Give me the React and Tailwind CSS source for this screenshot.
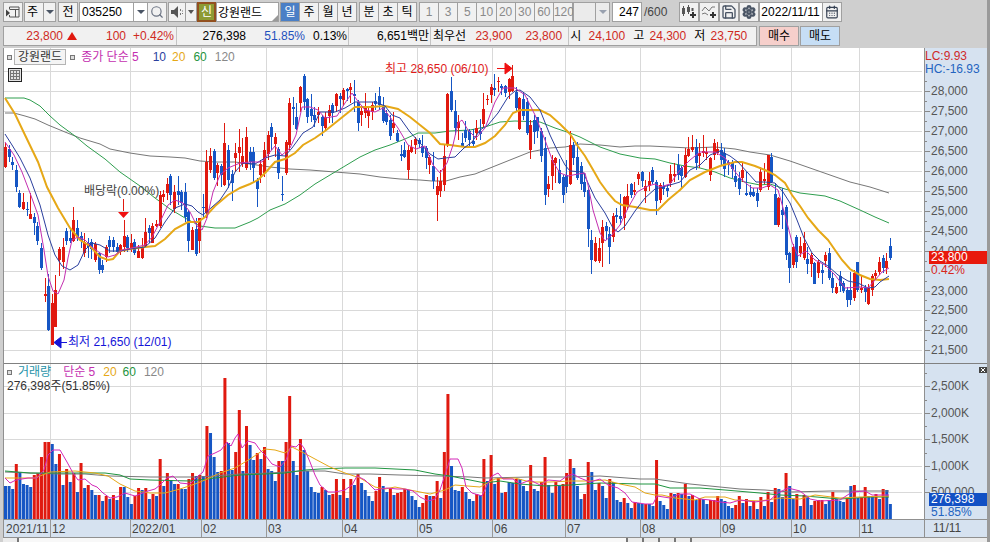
import React from 'react';
import { Search, Save, Settings, CalendarDays } from 'lucide-react';

const RED = '#e0190f';
const BLUE = '#1656c4';
const STEP = 3.597;
const FIRST_X = 5;

// one entry per trading day: colour, high, body top, body bottom, low
const CANDLES = `
r143 147 167 168,b145 149 157 162,b157 162 165 170,b165 170 187 192,b190 193 207 208,r193 202 209 210,b202 209 210 216,r193 214 219 219,b213 217 223 235,b222 226 241 245,
b243 248 268 270,r278 294 296 302,b274 286 330 331,r294 303 345 345,r275 290 327 327,r247 249 260 276,r238 247 262 269,b228 231 241 245,b229 238 241 243,r207 220 241 242,
b220 228 237 241,b232 236 241 248,r233 242 253 257,b238 243 247 258,b239 242 249 259,r242 244 260 262,b252 253 270 274,b260 265 270 273,r245 247 257 262,b236 240 247 253,
b237 240 247 252,b243 247 252 253,r244 245 252 255,r220 236 247 252,b235 237 248 252,r234 243 248 252,b239 242 253 255,r245 251 258 258,r238 247 258 259,r218 232 247 248,
b225 228 233 243,r223 226 243 243,r220 224 226 227,r191 195 226 228,r190 194 197 202,r178 184 193 200,b174 176 195 205,r185 192 209 213,b176 191 195 205,b190 192 203 210,
b183 192 217 222,b210 212 241 252,r227 230 250 250,b218 229 254 256,r218 218 241 253,b194 207 208 217,r150 162 213 218,r148 156 170 173,b149 151 178 180,r163 165 173 186,
b164 166 175 187,r123 143 185 186,b145 150 180 188,b170 174 183 201,r143 153 158 172,r129 147 153 172,r138 156 164 167,r127 137 168 170,b147 152 162 170,b147 152 168 183,
b178 180 189 207,r160 164 175 183,r142 150 173 177,r131 135 154 160,b123 127 137 150,r133 137 144 157,b147 149 173 179,b176 194 195 201,r140 142 173 175,r98 103 145 150,
b97 107 109 125,b103 117 129 130,r86 87 103 112,b74 76 102 110,b98 99 117 123,b94 109 116 122,b107 115 120 127,r107 112 115 123,b115 117 126 136,r112 117 128 131,
r105 110 116 123,b103 105 113 123,r93 94 106 112,b93 96 99 113,r88 90 100 106,b88 89 91 101,r83 87 90 103,b80 94 96 112,b100 102 123 131,r107 111 115 126,
r93 108 113 118,r107 111 116 128,r102 105 112 120,b93 101 104 110,b87 96 105 110,b97 106 121 123,b110 113 122 125,b115 120 136 140,r112 123 128 133,b130 133 141 142,
b145 154 156 161,b142 150 157 158,r145 150 170 179,r140 147 152 153,r137 139 145 154,b138 140 144 148,b135 146 153 157,b146 148 158 169,r155 157 165 174,b152 166 181 189,
r177 186 195 221,r170 181 191 197,r145 156 185 191,r93 94 144 147,b77 91 110 112,b100 111 128 135,r115 122 128 140,b133 143 146 147,b121 130 138 142,b129 131 140 147,
b129 141 144 147,r120 128 133 140,b119 131 134 140,r93 109 124 127,r95 99 100 105,r84 87 95 103,b74 88 90 96,r77 81 82 92,b84 86 88 95,b85 86 93 97,
r78 79 92 99,r65 76 91 92,b87 92 108 112,r97 98 129 130,b92 99 116 120,b98 102 133 135,r120 125 150 159,b115 120 132 144,b117 117 131 138,b128 131 156 162,
b137 148 195 205,r176 184 189 197,r155 160 176 190,r157 158 163 183,b159 170 183 184,b175 177 195 203,b160 175 187 193,r131 145 184 185,b142 145 158 165,b142 157 178 180,
b162 166 184 190,b173 182 192 197,b187 190 229 247,b230 240 260 274,r237 243 261 262,r238 248 261 263,r220 227 243 267,b222 226 231 240,b227 234 247 264,r213 216 237 242,
b208 215 217 223,b194 216 219 225,r196 197 218 230,r184 196 206 210,b183 184 195 198,r182 190 192 195,r172 174 179 185,b171 172 181 187,r180 186 191 203,r172 181 186 191,
b167 170 182 184,b180 182 201 215,r183 185 200 203,b182 187 189 195,b185 188 191 197,r165 174 183 187,r163 174 176 182,b154 165 175 180,b166 168 176 189,r148 155 177 178,
r137 149 156 157,r135 147 150 152,b139 147 163 170,r143 153 156 168,r135 151 153 157,r147 152 154 160,r157 158 175 181,r139 143 155 160,r142 149 153 155,b143 150 160 165,
b148 153 169 177,b160 162 163 175,b160 163 169 178,b165 176 182 187,b172 178 189 195,r162 170 178 182,b172 193 195 196,b185 192 195 197,b188 192 196 197,b188 193 201 207,
r167 172 190 192,r163 179 181 184,r155 155 187 190,b153 157 182 183,b183 194 225 225,r197 198 225 227,b188 210 215 229,b205 207 255 260,b252 253 268 283,r244 247 265 268,
b235 237 262 268,r237 246 253 257,r232 243 258 260,b247 259 264 274,r253 255 264 277,b262 263 284 284,r260 262 273 278,b264 270 273 284,r252 255 261 267,b248 253 278 280,
b273 278 288 293,r283 287 293 294,b271 276 286 292,b281 283 291 293,b287 290 300 307,b272 290 300 305,r270 273 298 301,b262 262 290 292,r276 288 290 293,b285 288 292 302,
r284 288 304 305,r274 276 290 296,r270 273 276 280,r257 262 272 275,b255 258 268 273,r253 261 268 274,b238 246 258 260
`.trim().split(/,\s*/).map((s) => {
    const [high, top, bottom, low] = s.slice(1).split(' ').map(Number);
    return { color: s[0] === 'r' ? RED : BLUE, high, top, bottom, low };
});

// one entry per trading day: colour and bar height
const VOLUMES = `
b33 b33 b30 r55 b47 b35 b34 b32 r44 r46 r62 r77 r77 b75 b55 r65 b34 r50 b37 r46
b27 r56 b31 r34 b29 b24 r24 b18 r23 b20 r24 b19 r32 b32 b22 b15 r23 r31 b29 r31
b20 r25 b23 r60 b33 r46 b39 b35 r35 b30 b30 r40 r46 b43 r44 b43 r93 b86 b62 b47
r48 r141 b76 b49 r67 r109 b48 r93 b74 b59 r66 b60 r72 b50 b48 b38 r58 b58 r77 r123
b58 b44 r80 b69 b48 b32 b27 b26 r32 b29 b24 r25 r40 b24 r40 b21 r40 b34 r45 b36
b29 b23 b18 r28 r42 b33 b27 r31 b24 r26 r27 r30 b29 b23 b19 b12 r16 r24 b23 r23
r38 b21 r67 r125 b53 b29 b28 r32 b27 b20 b18 r25 b24 r60 b38 r64 b35 r41 b26 r27
b37 b36 r40 b40 b33 b28 r54 b30 b28 r37 r62 b34 b26 r37 b33 r35 r46 r60 b51 b33
b20 r25 r57 b47 b29 r36 b33 b21 r40 b37 b19 b17 r21 b16 b11 r17 b16 b15 r15 b15
b13 r59 b18 b14 b10 r26 b25 r26 b25 r35 b23 r24 b19 r21 b20 b15 r19 r19 r23 b20
b18 b13 b11 r14 r23 b16 r20 b13 r18 b10 r22 b13 r27 b17 r31 b30 b22 r46 b33 b20
r25 b13 r24 b22 b14 r18 r19 r19 b15 b19 r27 b20 b18 b17 r21 b33 r34 b21 r22 r32
b23 b23 r25 b20 r30 b29 b15
`.trim().split(/\s+/).map((s) => ({ color: s[0] === 'r' ? RED : BLUE, height: Number(s.slice(1)) }));

const PRICE_LINES = [
    { color: '#777777', width: 1, points: '5,113 14,113 25,116 35,119 48,125 65,132 80,138 100,144 110,149 130,153 150,156 170,157 185,158 200,161 215,162 235,162 250,164 270,167 290,169 310,170 335,172 360,174 380,177 400,179 420,180 432,181 446,181 460,177 475,174 490,168 510,160 530,152 550,148 565,147 580,144 600,145 620,147 635,146 650,146 670,147 690,148 715,147 735,149 750,152 770,155 790,161 810,168 830,175 850,182 870,187 889,193' },
    { color: '#2f9e4f', width: 1, points: '5,98 24,98 30,100 40,106 50,116 60,125 75,136 87,146 105,159 120,172 140,186 155,198 170,209 185,218 200,226 215,228 235,228 250,222 258,218 270,210 285,204 300,195 315,184 330,175 345,166 360,157 375,150 390,145 405,139 418,133 435,133 450,131 470,130 485,127 500,122 515,121 540,122 555,128 570,133 580,137 600,147 620,154 640,158 655,159 670,163 685,166 700,168 715,172 730,178 745,182 760,185 770,184 785,189 800,193 825,196 840,201 860,210 875,217 889,223' },
    { color: '#e6a817', width: 2, points: '5,98 15,114 25,135 38,162 47,187 58,208 70,228 80,240 90,246 100,257 108,260 113,259 120,251 130,249 145,247 155,246 165,239 175,229 188,222 198,222 205,217 215,206 228,195 240,188 250,184 258,180 266,172 275,162 285,159 295,153 303,145 315,138 325,131 335,123 345,115 355,107 370,107 385,106 398,109 410,117 420,125 430,133 440,144 450,145 465,147 475,147 485,143 495,136 505,125 513,113 520,110 540,110 550,115 560,124 570,134 577,145 585,156 592,168 600,182 608,193 615,201 622,205 635,207 650,210 658,210 668,200 680,190 690,180 705,172 720,166 735,162 742,162 755,166 765,170 775,175 785,183 792,195 800,206 808,218 818,230 828,240 835,250 842,260 850,269 860,275 870,279 880,280 889,279' },
    { color: '#2b3f9e', width: 1, points: '5,134 12,145 20,158 30,178 40,205 48,235 55,255 62,266 70,270 78,265 85,250 92,243 100,245 110,251 120,251 130,249 145,247 155,238 165,222 175,208 185,204 192,206 198,212 203,215 212,207 220,200 228,188 235,172 243,163 255,164 265,158 275,155 285,156 292,148 303,133 313,127 320,112 335,112 345,108 355,102 375,102 385,106 392,115 400,118 410,132 420,143 430,154 438,159 445,158 455,157 464,148 472,142 480,130 488,125 498,113 508,97 515,91 520,90 530,97 540,110 550,135 558,152 565,165 570,171 583,172 588,183 595,198 605,213 613,228 618,232 625,226 635,211 645,198 655,189 670,185 680,182 690,170 700,165 710,155 720,151 730,156 738,162 748,173 756,182 765,182 775,183 783,192 790,203 797,220 804,238 812,253 820,261 828,266 838,275 848,281 858,283 868,288 875,287 880,282 889,276' },
    { color: '#c42fb0', width: 1, points: '5,142 14,155 22,172 30,193 38,215 44,250 48,276 53,291 58,294 64,280 68,258 72,240 78,237 85,240 92,247 100,253 108,257 115,255 122,250 132,248 145,245 152,237 160,222 168,205 175,200 183,203 190,212 197,226 202,230 207,218 213,192 220,175 228,168 240,163 250,162 262,162 270,152 275,146 282,155 290,148 296,135 302,107 310,107 318,110 325,118 337,116 345,103 352,93 357,100 365,110 375,112 383,108 390,117 398,128 408,145 416,149 425,146 433,165 440,173 447,163 453,145 458,123 462,120 468,130 476,138 485,128 495,102 503,88 515,88 525,95 535,115 545,140 553,162 560,173 568,176 578,174 585,173 588,185 593,210 600,233 605,241 612,235 620,225 628,208 637,192 648,186 655,184 660,187 670,184 680,170 690,160 700,152 715,152 725,158 732,168 742,180 752,188 762,188 770,185 778,190 785,215 792,242 798,256 806,251 815,260 825,265 835,275 845,288 860,287 868,288 875,280 882,272 889,268' },
];

const VOLUME_LINES = [
    { color: '#777777', points: '5,472 30,473 60,474 85,474 110,476 150,477 200,477 240,474 270,473 300,471 325,471 345,474 370,474 400,475 440,476 470,477 485,478 530,477 570,477 600,476 640,479 655,479 690,484 720,487 740,489 765,490 790,492 830,491 889,491' },
    { color: '#1f9440', points: '5,471 30,473 60,473 105,473 120,475 130,479 150,480 190,481 215,478 240,475 265,474 285,473 305,470 320,469 345,468 375,468 415,470 435,474 450,476 470,480 485,483 500,481 520,484 545,486 570,485 600,483 640,484 655,484 670,488 700,488 725,490 760,493 780,495 805,496 840,499 870,497 889,497' },
    { color: '#e6a817', points: '5,478 15,478 35,478 50,472 75,471 95,473 108,476 120,484 135,491 150,493 165,493 180,489 195,484 205,480 220,473 235,468 250,459 265,449 275,450 285,453 292,447 302,452 315,459 330,467 345,473 360,478 375,487 385,489 395,487 410,490 430,494 445,490 455,485 480,487 495,479 515,478 530,482 550,482 570,481 590,481 605,480 620,484 635,487 645,493 655,495 662,495 675,498 695,500 705,497 725,497 735,500 760,501 780,498 800,499 815,495 840,498 860,497 889,496' },
    { color: '#d428b8', points: '5,478 10,483 16,480 28,478 37,478 44,470 48,455 53,450 60,450 67,462 73,473 78,480 85,479 92,485 97,487 103,493 110,498 117,497 125,493 135,496 148,491 155,489 160,485 167,478 173,476 180,483 190,484 197,477 203,472 208,456 215,453 221,450 227,442 231,446 235,438 238,434 242,448 248,441 255,443 260,450 265,455 272,464 280,467 286,460 291,446 296,447 300,443 304,448 310,462 315,475 320,485 328,492 335,492 345,490 352,485 357,476 365,480 375,490 387,488 397,489 405,489 413,491 420,497 428,501 435,499 440,490 445,475 450,459 458,459 462,468 466,487 472,493 482,496 487,485 492,476 498,473 503,479 513,479 520,484 530,480 540,485 548,480 560,481 567,476 573,474 580,478 590,482 600,479 608,485 618,488 625,493 632,502 645,504 653,504 657,496 670,498 680,494 690,494 700,499 710,500 720,502 730,503 740,500 755,502 770,500 778,493 788,488 800,491 810,499 820,501 840,500 852,492 865,491 872,495 889,495' },
];

const MONTHS = [
    { x: 4, label: '2021/11' },
    { x: 50, label: '12' },
    { x: 130, label: '2022/01' },
    { x: 201, label: '02' },
    { x: 266, label: '03' },
    { x: 342, label: '04' },
    { x: 417, label: '05' },
    { x: 492, label: '06' },
    { x: 565, label: '07' },
    { x: 640, label: '08' },
    { x: 720, label: '09' },
    { x: 791, label: '10' },
    { x: 859, label: '11' },
];

// the 23,500 label gives way to the current price tag
const PRICE_TICKS = Array.from({ length: 14 }, (_, i) => ({
    y: Math.round(91.3 + i * 19.92),
    label: i === 9 ? '' : (28000 - i * 500).toLocaleString('en-US'),
}));

const VOLUME_TICKS = [
    { y: 386, label: '2,500K' },
    { y: 413, label: '2,000K' },
    { y: 439, label: '1,500K' },
    { y: 466, label: '1,000K' },
    { y: 492, label: '500,000' },
];

const dayX = (i) => Math.round(FIRST_X + i * STEP);

const Caret = ({ className = 'text-gray-600' }) => (
    <svg className={`h-1 w-2 ${className}`} viewBox="0 0 8 4" fill="currentColor" aria-hidden="true">
        <path d="M0 0h8L4 4z" />
    </svg>
);

const ToolButton = ({ label, children, className = 'w-5' }) => (
    <button type="button" aria-label={label} className={`flex h-5 shrink-0 items-center justify-center border border-[#a0a0a0] bg-[#f1f1f1] ${className}`}>
        {children}
    </button>
);

const Segments = ({ items, active, className }) => (
    <div className={`flex h-5 shrink-0 divide-x divide-[#a0a0a0] border border-[#a0a0a0] ${className}`}>
        {items.map((item) => (
            <button
                key={item}
                type="button"
                className={`min-w-0 flex-1 ${item === active ? 'bg-[#4a7fc6] text-white' : 'bg-[#f1f1f1]'}`}
            >
                {item}
            </button>
        ))}
    </div>
);

const Toolbar = () => (
    <div className="flex h-[23px] items-center pl-[3px]">
        <ToolButton label="창 전환">
            <svg className="h-4 w-4" viewBox="0 0 16 16" fill="none" stroke="#555" aria-hidden="true">
                <path d="M4.500 5V3h9.500v10H4.500v-2M4.500 5.500H14M10.500 5.500V13" />
                <path d="M1 5.500v7l4-3.500z" fill="#444" stroke="none" />
            </svg>
        </ToolButton>
        <div className="relative ml-px h-5 w-8 shrink-0 border border-[#a0a0a0]">
            <select aria-label="종목 구분" defaultValue="주" className="h-full w-full appearance-none bg-[#f1f1f1] pl-0.5">
                <option>주</option>
            </select>
            <span className="pointer-events-none absolute inset-y-0 right-0 flex w-3 items-center justify-center border-l border-[#a0a0a0]">
                <Caret />
            </span>
        </div>
        <div className="ml-0.5">
            <ToolButton label="전 종목">전</ToolButton>
        </div>
        <div className="ml-px flex h-5 w-[69px] shrink-0 border border-[#a0a0a0] bg-white">
            <input aria-label="종목코드" defaultValue="035250" className="w-[53px] min-w-0 pl-0.5" />
            <button type="button" aria-label="종목코드 목록" className="flex flex-1 items-center justify-center border-l border-[#a0a0a0]">
                <Caret />
            </button>
        </div>
        <ToolButton label="검색" className="-ml-px w-5">
            <Search className="h-3.5 w-3.5 text-gray-500" />
        </ToolButton>
        <div className="ml-px flex">
            <ToolButton label="소리" className="w-[18px]">
                <svg className="h-3.5 w-3.5" viewBox="0 0 14 14" aria-hidden="true">
                    <path d="M1 5h3l4-4v12L4 9H1z" fill="#555" />
                    <path d="M10 4h1v2h-1zM10 8h1v2h-1zM12 5.500h1v1h-1zM12 8h1v1h-1z" fill="#777" />
                </svg>
            </ToolButton>
            <ToolButton label="소리 목록" className="-ml-px w-3">
                <svg className="h-1 w-1.5" viewBox="0 0 6 4" fill="#555" aria-hidden="true"><path d="M0 0h6L3 4z" /></svg>
            </ToolButton>
        </div>
        <button type="button" className="h-5 w-[19px] shrink-0 border-2 border-[#92501f] bg-[#8d9b33] leading-none text-white">신</button>
        <div className="relative shrink-0">
            <input aria-label="종목명" defaultValue="강원랜드" className="block h-5 w-[63px] border border-[#a0a0a0] bg-white pl-px" />
            <svg className="absolute right-px bottom-px h-1.5 w-1.5" viewBox="0 0 6 6" fill="#999" aria-hidden="true"><path d="M6 0v6H0z" /></svg>
        </div>
        <div className="ml-px flex gap-0.5">
            <Segments items={['일', '주', '월', '년']} active="일" className="w-[77px]" />
            <Segments items={['분', '초', '틱']} className="w-[58px]" />
            <Segments items={['1', '3', '5', '10', '20', '30', '60', '120']} className="w-[154px] text-[#8a8a8a]" />
        </div>
        <div className="relative h-5 w-[37px] shrink-0 border border-[#a0a0a0]">
            <select aria-label="주기 선택" disabled className="block h-full w-full appearance-none bg-[#ebebeb]">
                <option></option>
            </select>
            <span className="pointer-events-none absolute inset-y-0 right-0 flex w-3.5 items-center justify-center border-l border-[#a0a0a0]">
                <Caret className="text-gray-400" />
            </span>
        </div>
        <label className="ml-0.5 flex items-center text-[#444]">
            <input aria-label="표시 개수" defaultValue="247" className="h-5 w-[30px] border border-[#a0a0a0] bg-white pr-0.5 text-right text-black" />
            <span className="ml-0.5">/600</span>
        </label>
        <div className="ml-3 flex">
            <ToolButton label="캔들 추가">
                <svg className="h-4 w-4" viewBox="0 0 16 16" fill="#555" aria-hidden="true">
                    <path d="M1 4h3v6H1zM2 2h1v10H2zM6 3h3v5H6zM7 1h1v9H7zM10.500 4h2v3h-2z" />
                    <path d="M11 8h2v2h2v2h-2v2h-2v-2H9v-2h2z" fill="#333" />
                </svg>
            </ToolButton>
            <ToolButton label="지표 추가">
                <svg className="h-4 w-4" viewBox="0 0 16 16" aria-hidden="true">
                    <path d="M1 7l3-4 4 4 3-4h3M1 10l3-1 3 2" fill="none" stroke="#777" />
                    <path d="M11 8h2v2h2v2h-2v2h-2v-2H9v-2h2z" fill="#333" />
                </svg>
            </ToolButton>
            <ToolButton label="저장">
                <Save className="h-4 w-4 text-gray-600" strokeWidth={2} />
            </ToolButton>
            <ToolButton label="설정">
                <Settings className="h-3.5 w-3.5 text-gray-600" strokeWidth={4} />
            </ToolButton>
        </div>
        <input aria-label="조회일" defaultValue="2022/11/11" className="h-5 w-16 shrink-0 border border-[#a0a0a0] bg-white pl-px" />
        <ToolButton label="달력" className="-ml-px w-5">
            <CalendarDays className="h-3.5 w-3.5 text-gray-700" strokeWidth={2} />
        </ToolButton>
    </div>
);

const QuoteBar = () => (
    <div className="flex h-[25px] items-center pl-[3px] text-[#cf2a1e]">
        <div className="flex h-5 w-[754px] shrink-0 items-center border border-[#a0a0a0] bg-[#f1f1f1] whitespace-nowrap">
            <span className="w-[59px] text-right">23,800</span>
            <svg className="ml-1 h-2 w-2.5" viewBox="0 0 10 8" fill={RED} aria-label="상승"><path d="M5 0l5 8H0z" /></svg>
            <span className="w-[49px] text-right">100</span>
            <span className="w-12 text-right">+0.42%</span>
            <div className="ml-0.5 flex h-full items-center border-l border-[#c4c4c4] text-black">
                <span className="w-[69px] text-right">276,398</span>
                <span className="w-[59px] text-right text-[#1f50bd]">51.85%</span>
                <span className="w-[42px] text-right">0.13%</span>
            </div>
            <div className="ml-px flex h-full items-center border-l border-[#c4c4c4] text-black">
                <span className="w-20 text-right">6,651백만</span>
            </div>
            <div className="ml-px flex h-full items-center border-l border-[#c4c4c4]">
                <span className="ml-0.5 text-black">최우선</span>
                <span className="w-[46px] text-right">23,900</span>
                <span className="w-[50px] text-right">23,800</span>
            </div>
            <div className="ml-1.5 flex h-full items-center border-l border-[#c4c4c4]">
                <span className="ml-px text-black">시</span>
                <span className="w-11 text-right">24,100</span>
                <span className="ml-2 text-black">고</span>
                <span className="w-[42px] text-right">24,300</span>
                <span className="ml-2 text-black">저</span>
                <span className="w-[42px] text-right">23,750</span>
            </div>
        </div>
        <button type="button" className="ml-0.5 h-5 w-10 border border-[#a0a0a0] bg-[#f6cfcb] text-black">매수</button>
        <button type="button" className="ml-px h-5 w-10 border border-[#a0a0a0] bg-[#c6def5] text-black">매도</button>
    </div>
);

const Marker = () => <span className="h-[5px] w-[5px] border border-[#777] bg-[#ddd]" />;

const GridLines = ({ ys, top, bottom }) => (
    <g stroke="#d9d9d9" shapeRendering="crispEdges">
        {ys.map((y) => <line key={y} x1="4" x2="922" y1={y + 0.5} y2={y + 0.5} />)}
        {MONTHS.slice(1).map((m) => <line key={m.x} x1={m.x + 0.5} x2={m.x + 0.5} y1={top} y2={bottom} />)}
    </g>
);

const PricePane = () => (
    <div className="relative h-[315px] min-w-0 flex-1 overflow-hidden bg-white">
        <svg className="block h-full w-full" role="img" aria-label="강원랜드 일봉 차트">
            <g transform="translate(-4 -48)">
                <GridLines ys={[71, ...PRICE_TICKS.map((t) => t.y)]} top={48} bottom={363} />
                {PRICE_LINES.slice(0, 2).map((l) => (
                    <polyline key={l.color} points={l.points} fill="none" stroke={l.color} strokeWidth={l.width} />
                ))}
                <g shapeRendering="crispEdges">
                    {CANDLES.map((c, i) => (
                        <g key={i} fill={c.color}>
                            <rect x={dayX(i)} y={c.high} width="1" height={c.low - c.high} />
                            <rect x={dayX(i) - 1} y={c.top} width="3" height={c.bottom - c.top} />
                        </g>
                    ))}
                </g>
                {PRICE_LINES.slice(2).map((l) => (
                    <polyline key={l.color} points={l.points} fill="none" stroke={l.color} strokeWidth={l.width} />
                ))}
                <g fontSize="12">
                    <text x="385" y="73" fill="#e01a1a">최고 28,650 (06/10)</text>
                    <path d="M497 68.500h9M505 63l7 5.500-7 5.500z" fill="#f01010" stroke="#f01010" />
                    <text x="84" y="195" fill="#444">배당락(0.00%)</text>
                    <path d="M123.500 199v12" stroke={RED} />
                    <path d="M118 212h11l-5.500 6z" fill="#f01010" />
                    <path d="M67 342.500h-7M61 337l-7 5.500 7 5.500z" fill="#1414d8" stroke="#1414d8" />
                    <text x="68" y="346" fill="#1414d8">최저 21,650 (12/01)</text>
                </g>
            </g>
        </svg>
        <div className="absolute top-0 left-0 flex h-[18px] items-center pl-[3px]">
            <Marker />
            <span className="ml-0.5 border border-[#b4b4b4] bg-[#f4f4f4] px-[3px] leading-[14px] text-[#333]">강원랜드</span>
            <span className="ml-1 flex"><Marker /></span>
            <span className="ml-1.5 text-[#c42fb0]">종가 단순 5</span>
            <span className="ml-3.5 text-[#2b3f9e]">10</span>
            <span className="ml-1.5 text-[#e6a817]">20</span>
            <span className="ml-2 text-[#1f9440]">60</span>
            <span className="ml-2 text-[#888]">120</span>
        </div>
        <button type="button" aria-label="격자" className="absolute top-5 left-1 h-3.5 w-3.5 border border-[#222] bg-[#e4e4e4]">
            <svg className="h-3 w-3" viewBox="0 0 12 12" fill="none" stroke="#777" shapeRendering="crispEdges" aria-hidden="true">
                <path d="M1.500 1.500h9v9h-9zM4.500 1.500v9M7.500 1.500v9M1.500 4.500h9M1.500 7.500h9" />
            </svg>
        </button>
    </div>
);

const VolumePane = () => (
    <div className="relative h-[155px] min-w-0 flex-1 overflow-hidden bg-white">
        <svg className="block h-full w-full" role="img" aria-label="거래량 차트">
            <g transform="translate(-4 -364)">
                <GridLines ys={VOLUME_TICKS.map((t) => t.y)} top={364} bottom={519} />
                {VOLUMES.map((v, i) => (
                    <rect key={i} x={FIRST_X + i * STEP - 1} y={519 - v.height} width="3" height={v.height} fill={v.color} />
                ))}
                {VOLUME_LINES.map((l) => (
                    <polyline key={l.color} points={l.points} fill="none" stroke={l.color} />
                ))}
            </g>
        </svg>
        <div className="absolute top-0 left-0 pl-[3px] leading-[14px]">
            <div className="flex items-center pt-px">
                <Marker />
                <span className="ml-1.5 text-[#2492a8]">거래량</span>
                <span className="ml-3 text-[#c42fb0]">단순 5</span>
                <span className="ml-2 text-[#e6a817]">20</span>
                <span className="ml-1.5 text-[#1f9440]">60</span>
                <span className="ml-2 text-[#888]">120</span>
            </div>
            <div className="text-[#333]">276,398주(51.85%)</div>
        </div>
    </div>
);

const Axis = ({ ticks, top, minor, height, children }) => (
    <div className={`relative w-[63px] shrink-0 border-l border-[#909090] bg-[#d6e2f0] ${height}`}>
        <svg className="block h-full w-full" aria-hidden="true">
            <g transform={`translate(0 ${-top})`} fontSize="12" fill="#555">
                {ticks.map((t) => (
                    <g key={t.y}>
                        <path d={`M0 ${t.y + 0.5}h5M0 ${t.y - minor + 0.5}h2`} stroke="#888" />
                        {t.label && <text x="6" y={t.y + 4}>{t.label}</text>}
                    </g>
                ))}
            </g>
        </svg>
        {children}
    </div>
);

const App = () => {
    return (
        <div className="flex w-full flex-col border-r-[3px] border-[#9a9a9a] bg-[#cfcfcf] font-['Liberation_Sans','Noto_Sans_CJK_KR',sans-serif] text-[12px] leading-4 text-black">
            <Toolbar />
            <QuoteBar />

            <div className="ml-[3px] border-l border-[#909090]">
                <div className="flex border-b border-[#808080]">
                    <PricePane />
                    <Axis ticks={PRICE_TICKS} top={48} minor={10} height="h-[315px]">
                        <div className="absolute top-0.5 left-0 w-full bg-[#d6e2f0] leading-[13px]">
                            <div className="text-[#cf2a2a]">LC:9.93</div>
                            <div className="text-[#2464c0]">HC:-16.93</div>
                        </div>
                        <div className="absolute top-[203px] right-0 left-1 leading-[13px]">
                            <div className="bg-[#e8190c] pl-0.5 text-white">23,800</div>
                            <div className="pl-0.5 text-[#d6281e]">0.42%</div>
                        </div>
                    </Axis>
                </div>
                <div className="flex border-b border-[#909090]">
                    <VolumePane />
                    <Axis ticks={VOLUME_TICKS} top={364} minor={13} height="h-[155px]">
                        <button type="button" aria-label="닫기" className="absolute top-[3px] right-0 flex h-1.5 w-2 items-center justify-center bg-[#444]">
                            <svg className="h-1 w-1" viewBox="0 0 4 4" stroke="#fff" aria-hidden="true"><path d="M0 0l4 4M4 0L0 4" /></svg>
                        </button>
                        <div className="absolute right-0 bottom-0 left-1 leading-[13px]">
                            <div className="bg-[#1250c4] pl-0.5 text-white">276,398</div>
                            <div className="pl-0.5 text-[#2464c0]">51.85%</div>
                        </div>
                    </Axis>
                </div>
                <div className="flex h-[18px] border-b border-[#909090] bg-[#d6e2f0]">
                    <svg className="h-full min-w-0 flex-1" role="img" aria-label="날짜 축">
                        <g transform="translate(-4 0)" fontSize="12" fill="#444">
                            {MONTHS.map((m, i) => (
                                <g key={m.x}>
                                    {i > 0 && <path d={`M${m.x + 0.5} 0v18`} stroke="#999" />}
                                    <text x={m.x + 2} y="13">{m.label}</text>
                                </g>
                            ))}
                        </g>
                    </svg>
                    <div className="w-[63px] shrink-0 border-l border-[#909090] pl-2 text-[#444]">11/11</div>
                </div>
            </div>

            <div className="ml-[3px] flex h-1 divide-x-2 divide-[#777] bg-[#ececec]">
                <div className="w-4" />
                <div className="flex-1 bg-[#f8f8f8]" />
                <div className="w-4" />
                <div className="w-4" />
                <div className="w-4" />
                <div className="w-4" />
                <div className="w-[30%]" />
            </div>
        </div>
    );
};

export default App;
